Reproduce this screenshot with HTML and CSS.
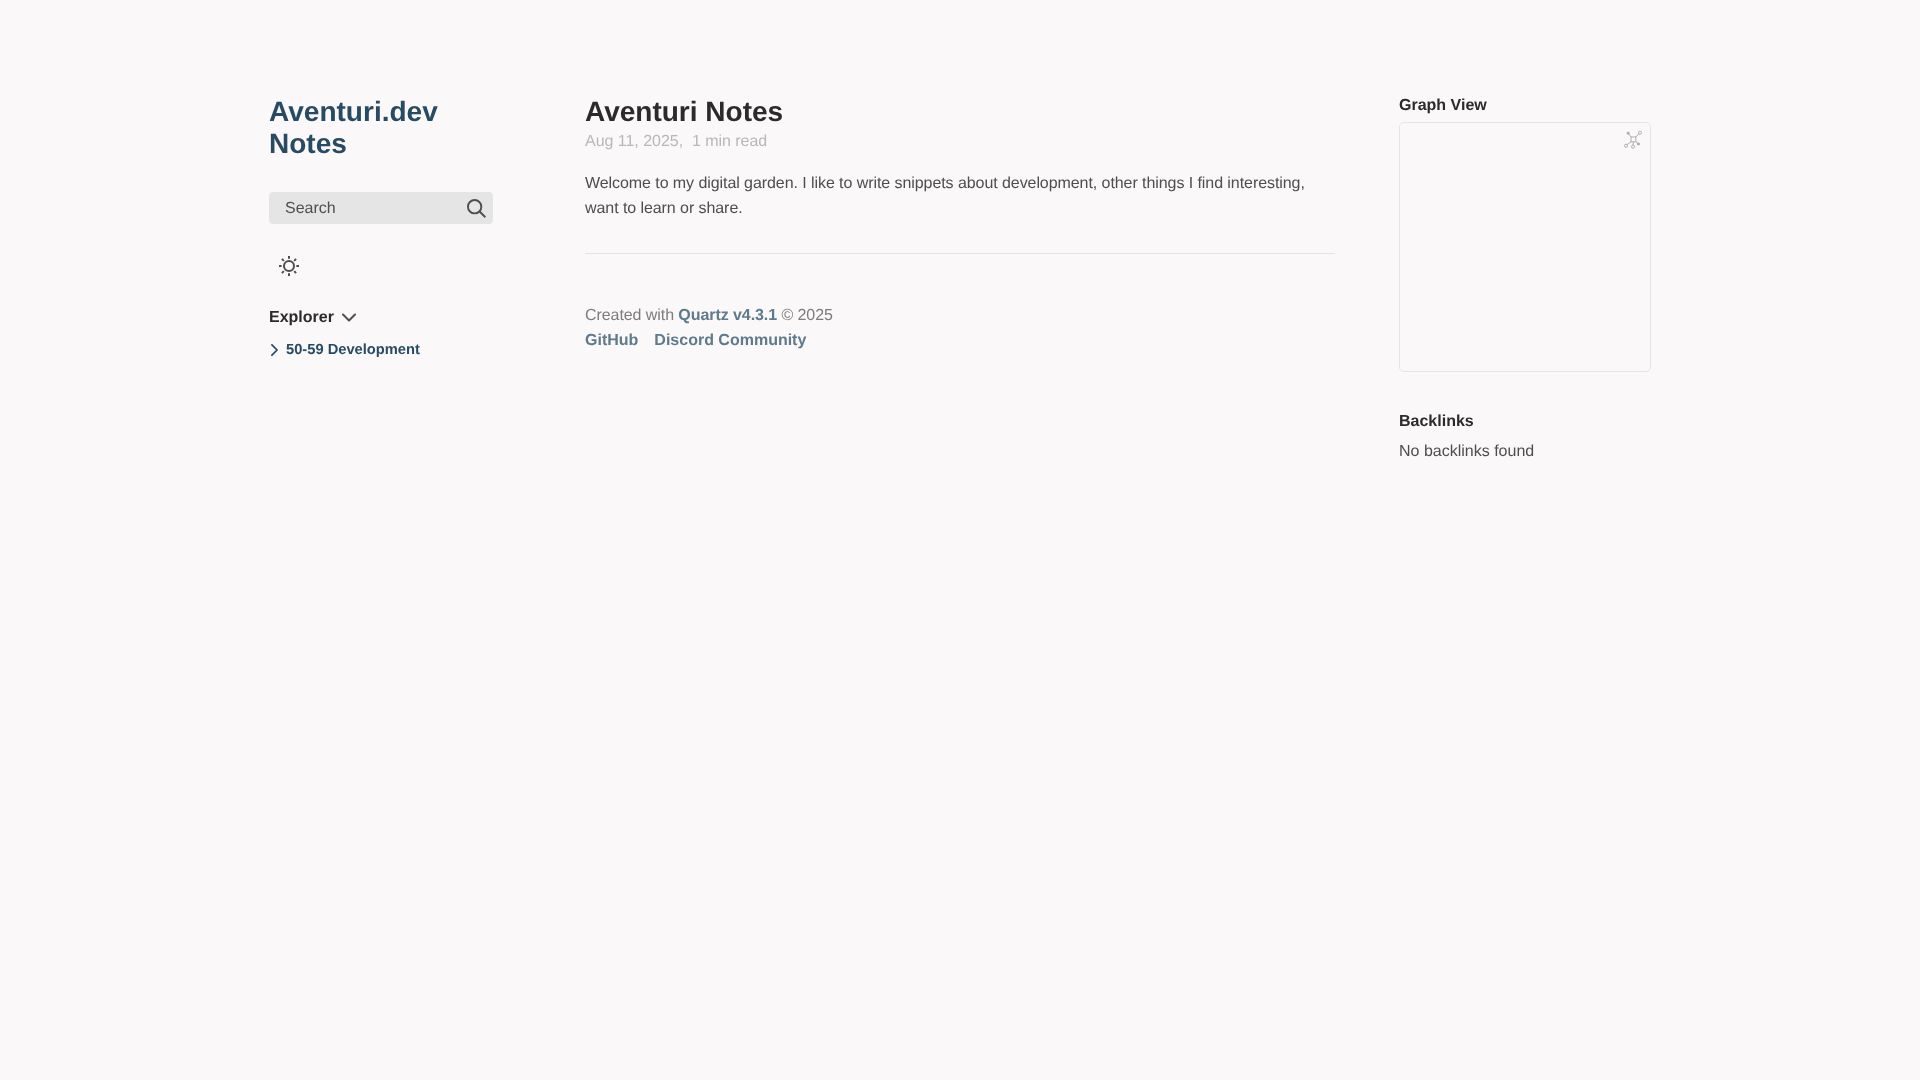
FILE: index.html
```html
<!DOCTYPE html>
<html lang="en">
<head>
<meta charset="utf-8">
<title>Aventuri Notes</title>
<link rel="stylesheet" href="styles.css">
</head>
<body>
<div class="page">
  <aside class="left">
    <h2 class="site-title"><a href="#">Aventuri.dev Notes</a></h2>
    <div class="search">
      <span class="search-text">Search</span>
      <svg class="search-icon" viewBox="0 0 19.9 19.7" width="19" height="19"><g fill="none" stroke="#4e4e4e" stroke-width="2"><path stroke-linecap="square" d="M18.5 18.3l-5.4-5.4"/><circle cx="8" cy="8" r="7"/></g></svg>
    </div>
    <div class="theme">
      <svg viewBox="0 0 24 24" width="20" height="20" fill="none" stroke="#4e4e4e"><circle cx="12" cy="12" r="6" stroke-width="2.4"/><g stroke-width="2.4" stroke-linecap="butt"><path d="M12 0v3.2M12 20.8V24M0 12h3.2M20.8 12H24M3.5 3.5l2.3 2.3M18.2 18.2l2.3 2.3M3.5 20.5l2.3-2.3M18.2 5.8l2.3-2.3"/></g></svg>
    </div>
    <div class="explorer-head">
      <h3 class="explorer-title">Explorer</h3>
      <svg width="14" height="9" viewBox="5 8 14 8" class="explorer-fold" fill="none" stroke="#4e4e4e" stroke-width="2" stroke-linecap="round" stroke-linejoin="round"><path d="M6 9l6 6 6-6"/></svg>
    </div>
    <div class="folder">
      <svg class="folder-icon" width="7" height="12" viewBox="8 5 8 14" fill="none" stroke="#284b63" stroke-width="2" stroke-linecap="round" stroke-linejoin="round"><path d="M9 6l6 6-6 6"/></svg>
      <a class="folder-link" href="#">50-59 Development</a>
    </div>
  </aside>
  <main class="center">
    <h1 class="article-title">Aventuri Notes</h1>
    <p class="meta">Aug 11, 2025, &nbsp;1 min read</p>
    <article class="body-text">Welcome to my digital garden. I like to write snippets about development, other things I find interesting, want to learn or share.</article>
    <hr class="rule">
    <footer class="footer">
      <p>Created with <a href="#">Quartz v4.3.1</a> © 2025</p>
      <ul class="footer-links"><li><a href="#">GitHub</a></li><li><a href="#">Discord Community</a></li></ul>
    </footer>
  </main>
  <aside class="right">
    <h3 class="side-head">Graph View</h3>
    <div class="graph">
      <svg class="graph-icon" viewBox="0 0 20 20" width="18" height="18" fill="none" stroke="#a8a8a8" stroke-width="1"><rect x="7.8" y="6.6" width="5.4" height="5.4"/><path d="M7.8 6.6L4.8 2.6M13.2 6.6L16.4 3.2M7.8 12L3.4 15.2M10.4 12L10 15.6M13.2 12L15.6 14"/><circle cx="17.8" cy="1.9" r="1.7"/><circle cx="2.2" cy="16.4" r="1.7"/><circle cx="10" cy="17.4" r="1.7"/><circle cx="4.6" cy="2.4" r="1.2" fill="#a8a8a8"/><circle cx="16" cy="14.4" r="1.2" fill="#a8a8a8"/></svg>
    </div>
    <h3 class="side-head backlinks-head">Backlinks</h3>
    <p class="no-backlinks">No backlinks found</p>
  </aside>
</div>
</body>
</html>
```
FILE: styles.css
```css
* { box-sizing: border-box; }
html, body { margin: 0; padding: 0; }
body {
  background: #faf8f8;
  color: #4e4e4e;
  font-family: "Liberation Sans", Arial, sans-serif;
  font-size: 16px;
  line-height: 25px;
  min-height: 1080px;
  text-rendering: geometricPrecision;
  -webkit-font-smoothing: antialiased;
}
a { text-decoration: none; }
.page {
  display: flex;
  justify-content: center;
  align-items: flex-start;
  padding-top: 96px;
  will-change: transform;
}
.left { width: 224px; margin-right: 92px; flex: none; }
.center { width: 750px; margin-right: 64px; flex: none; }
.right { width: 252px; flex: none; }

.site-title {
  margin: 0;
  font-size: 28px;
  line-height: 32px;
  font-weight: 700;
  letter-spacing: 0.02px;
}
.site-title a { color: #284b63; }
.search {
  display: flex;
  align-items: center;
  justify-content: space-between;
  height: 32px;
  margin-top: 32px;
  padding: 0 7px 0 16px;
  background: #e5e5e5;
  border-radius: 4px;
}
.search-text { color: #4e4e4e; }
.search-icon { display: block; }
.theme { display: flex; align-items: center; height: 20px; margin-top: 32px; padding-left: 10px; }
.explorer-head { display: flex; align-items: center; margin-top: 32px; height: 20px; }
.explorer-title { margin: 0; font-size: 16px; font-weight: 700; color: #2b2b2b; line-height: 20px; }
.explorer-fold { margin-left: 8px; margin-bottom: 2px; }
.folder { display: flex; align-items: center; margin-top: 12px; height: 20px; }
.folder-icon { flex: none; margin-left: 2px; margin-right: 8px; }
.folder-link { color: #284b63; font-weight: 700; font-size: 14.7px; }

.article-title { margin: 0; font-size: 28px; line-height: 32px; font-weight: 700; color: #2b2b2b; }
.meta { margin: 1px 0 0; color: #b8b8b8; line-height: 25px; letter-spacing: -0.03px; }
.body-text { margin-top: 17px; letter-spacing: -0.07px; }
.rule { height: 1px; border: 0; background: #e5e5e5; margin: 32px 0 0; }
.footer { margin-top: 49px; color: #7d7d7d; }
.footer p { margin: 0; letter-spacing: -0.07px; }
.footer a { color: #5e7a8c; font-weight: 700; }
.footer-links { display: flex; gap: 16px; list-style: none; margin: 0; padding: 0; }

.side-head { margin: 0; font-size: 16px; font-weight: 700; color: #2b2b2b; line-height: 20px; }
.graph {
  position: relative;
  height: 250px;
  margin-top: 6px;
  border: 1px solid #e5e5e5;
  border-radius: 5px;
}
.graph-icon { position: absolute; top: 8px; right: 8px; }
.backlinks-head { margin-top: 40px; }
.no-backlinks { margin: 7px 0 0; }
```
